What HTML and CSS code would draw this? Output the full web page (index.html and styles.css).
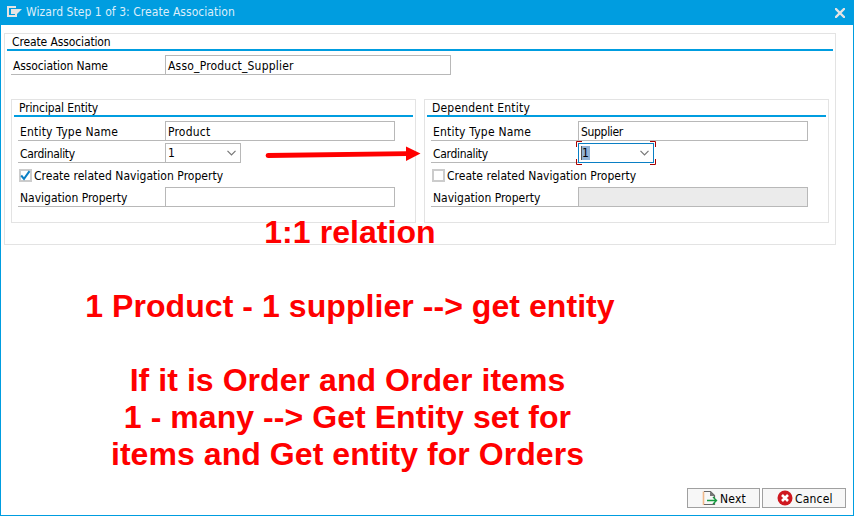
FILE: index.html
```html
<!DOCTYPE html>
<html lang="en">
<head>
<meta charset="utf-8">
<title>Create Association</title>
<link rel="stylesheet" href="styles.css">
</head>
<body>
<div class="window">
  <header class="titlebar">
    <svg class="logo" width="15" height="11" viewBox="0 0 15 11"><path d="M9 1H1V10H9V8" fill="none" stroke="#e4e4e4" stroke-width="2"/><path d="M4 3H15L10 8H4Z" fill="#e4e4e4"/></svg>
    <h1 class="title">Wizard Step 1 of 3: Create Association</h1>
    <svg class="close" width="10" height="10" viewBox="0 0 10 10"><path d="M1 1L9 9M9 1L1 9" stroke="#e4e4e4" stroke-width="2.3" stroke-linecap="square"/></svg>
  </header>
  <main class="content">
    <section class="group outer">
      <h2 class="heading snug">Create Association</h2>
      <div class="row name-row"><label class="label snug">Association Name</label><div class="field name-field loose">Asso_Product_Supplier</div></div>
      <div class="entities">
        <section class="group entity">
          <h2 class="heading snug">Principal Entity</h2>
          <div class="rows">
            <div class="row"><label class="label loose">Entity Type Name</label><div class="field loose">Product</div></div>
            <div class="row"><label class="label tight">Cardinality</label><div class="field select"><span>1</span><svg width="9" height="6" viewBox="0 0 9 6"><path d="M.5 .8L4.5 4.8L8.5 .8" fill="none" stroke="#777" stroke-width="1.2"/></svg></div></div>
            <div class="check-row"><span class="box"><svg width="11" height="11" viewBox="0 0 11 11"><path d="M1.2 5.5L4 8.8L9.5 1.2" fill="none" stroke="#0a7fc4" stroke-width="2"/></svg></span><span class="check-label">Create related Navigation Property</span></div>
            <div class="row"><label class="label">Navigation Property</label><div class="field"></div></div>
          </div>
        </section>
        <section class="group entity">
          <h2 class="heading loose">Dependent Entity</h2>
          <div class="rows">
            <div class="row"><label class="label loose">Entity Type Name</label><div class="field tight">Supplier</div></div>
            <div class="row"><label class="label tight">Cardinality</label><div class="field select focused"><span class="selected">1</span><svg width="9" height="6" viewBox="0 0 9 6"><path d="M.5 .8L4.5 4.8L8.5 .8" fill="none" stroke="#777" stroke-width="1.2"/></svg><svg class="corners" width="80" height="24" viewBox="0 0 80 24"><path d="M.5 6V.5H6M74 .5H79.5V6M79.5 18V23.5H74M6 23.5H.5V18" fill="none" stroke="#a80000"/></svg></div></div>
            <div class="check-row"><span class="box"></span><span class="check-label">Create related Navigation Property</span></div>
            <div class="row"><label class="label">Navigation Property</label><div class="field disabled"></div></div>
          </div>
        </section>
      </div>
    </section>
  </main>
  <footer class="footer">
    <button class="button next"><svg width="16" height="16" viewBox="0 0 16 16"><path d="M1.5 15V1.5" fill="none" stroke="#f0b98a" stroke-width="1.6"/><path d="M2 1.5H8.5L12.5 5.5V8M12.5 13V14.5H2" fill="none" stroke="#666" stroke-width="1.2"/><path d="M8 1.500V6H13Z" fill="#777"/><path d="M5 10.5H14.500M11 7L14.500 10.500L11 14" fill="none" stroke="#149b3f" stroke-width="1.4"/></svg><span>Next</span></button>
    <button class="button cancel"><svg width="16" height="16" viewBox="0 0 16 16"><circle cx="8" cy="8" r="7.5" fill="#cf1820"/><path d="M5 5L11 11M11 5L5 11" stroke="#fff" stroke-width="2.6"/></svg><span>Cancel</span></button>
  </footer>
  <svg class="arrow" width="156" height="16" viewBox="0 0 156 16"><path d="M3 9.5L142 7.6" stroke="#f00" stroke-width="4.8" stroke-linecap="round"/><path d="M141 .5L155.5 7.500L141 15Z" fill="#f00"/></svg>
  <div class="note">
    <p>1:1 relation</p>
    <p>1 Product - 1 supplier --&gt; get entity</p>
    <p class="trail">If it is Order and Order items<br>1 - many --&gt; Get Entity set for<br>items and Get entity for Orders</p>
  </div>
</div>
</body>
</html>
```
FILE: styles.css
```css
* { box-sizing: border-box; }
body { margin: 0; background: #fff; color: #000; font: 12px/18px "DejaVu Sans Condensed", "DejaVu Sans", sans-serif; }
h1, h2 { margin: 0; font-size: 12px; font-weight: normal; }
svg { display: block; flex: none; }
.window { position: relative; display: flex; flex-direction: column; height: 516px; border: 1px solid #009de0; border-top: 0; overflow: hidden; white-space: nowrap; }
.titlebar { display: flex; align-items: center; height: 25px; padding: 0 8px 0 6px; background: #009de0; color: #dceefa; }
.logo { margin-top: -2px; }
.title { flex: 1; margin-left: 4px; margin-top: -1px; letter-spacing: .05px; }
.close { margin-top: 1px; }
.content { flex: 1; padding: 8px 17px 0 3px; }
.group { border: 1px solid #e3e3e3; }
.outer { height: 212px; }
.heading { height: 17px; margin: 0 2px; padding-left: 5px; line-height: 16px; border-bottom: 2px solid #009de0; }
.row { display: flex; height: 20px; }
.name-row { margin: 4px 0 0 6px; }
.label { width: 147px; padding-left: 2px; line-height: 22px; border-bottom: 1px solid #b8b8b8; }
.name-row .label { width: 154px; }
.field { width: 230px; height: 20px; padding-left: 2px; border: 1px solid #b8b8b8; line-height: 20px; }
.name-row .name-field { width: 286px; }
.snug { letter-spacing: -.12px; }
.tight { letter-spacing: -.32px; }
.loose { letter-spacing: .2px; }
.entities { display: flex; gap: 8px; margin: 24px 6px 0; }
.entity { width: 405px; height: 124px; }
.rows { display: flex; flex-direction: column; gap: 2px; padding: 4px 0 0 6px; }
.select { position: relative; display: flex; align-items: center; justify-content: space-between; width: 76px; padding-right: 4px; line-height: 17px; }
.focused { border-color: #0a7fc4; }
.selected { width: 9px; height: 14px; line-height: 14px; margin-top: -1px; background: #91b2d5; border-left: 1px solid #555; }
.corners { position: absolute; left: -3px; top: -3px; }
.check-row { display: flex; align-items: center; height: 20px; }
.box { width: 13px; height: 13px; margin-left: 1px; border: 2px solid #ccc; }
.box svg { margin: -1px; }
.check-label { margin: 2px 0 0 2px; letter-spacing: .03px; }
.disabled { background: #ebebeb; }
.footer { display: flex; justify-content: flex-end; gap: 2px; padding: 0 7px 7px 0; }
.button { display: flex; align-items: center; height: 20px; padding: 0 0 0 14px; border: 1px solid #a0a0a0; background: #f7f7f7; color: #000; font: inherit; }
.next { width: 73px; }
.cancel { width: 84px; }
.button span { margin: 2px 0 0 2px; letter-spacing: .2px; }
.arrow { position: absolute; left: 264px; top: 146px; }
.note { position: absolute; left: 0; top: 214px; width: 698px; color: #f00; font: bold 32px/37px "Liberation Sans", Arial, sans-serif; letter-spacing: .06px; text-align: center; }
.note p { margin: 0 0 37px; }
.note .trail { padding-right: 5px; }
```
